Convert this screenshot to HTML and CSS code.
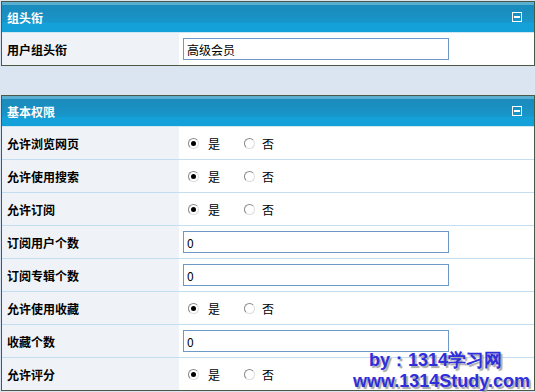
FILE: index.html
```html
<!DOCTYPE html>
<html>
  <head>
    <meta charset="utf-8">
    <title>用户组权限</title>
    <link rel="stylesheet" href="styles.css">
  </head>
  <body>

    <section class="panel">
      <div class="panelHead">
        <h2>组头衔</h2>
        <span class="toggle"></span>
      </div>
      <div class="row">
        <div class="label">用户组头衔</div>
        <div class="value"><input class="txt" type="text" value="高级会员"></div>
      </div>
    </section>

    <section class="panel">
      <div class="panelHead">
        <h2>基本权限</h2>
        <span class="toggle"></span>
      </div>
      <div class="row">
        <div class="label">允许浏览网页</div>
        <div class="value">
          <label class="opt"><input type="radio" name="r1" checked><span>是</span></label>
          <label class="opt"><input type="radio" name="r1"><span>否</span></label>
        </div>
      </div>
      <div class="row">
        <div class="label">允许使用搜索</div>
        <div class="value">
          <label class="opt"><input type="radio" name="r2" checked><span>是</span></label>
          <label class="opt"><input type="radio" name="r2"><span>否</span></label>
        </div>
      </div>
      <div class="row">
        <div class="label">允许订阅</div>
        <div class="value">
          <label class="opt"><input type="radio" name="r3" checked><span>是</span></label>
          <label class="opt"><input type="radio" name="r3"><span>否</span></label>
        </div>
      </div>
      <div class="row">
        <div class="label">订阅用户个数</div>
        <div class="value"><input class="txt" type="text" value="0"></div>
      </div>
      <div class="row">
        <div class="label">订阅专辑个数</div>
        <div class="value"><input class="txt" type="text" value="0"></div>
      </div>
      <div class="row">
        <div class="label">允许使用收藏</div>
        <div class="value">
          <label class="opt"><input type="radio" name="r4" checked><span>是</span></label>
          <label class="opt"><input type="radio" name="r4"><span>否</span></label>
        </div>
      </div>
      <div class="row">
        <div class="label">收藏个数</div>
        <div class="value"><input class="txt" type="text" value="0"></div>
      </div>
      <div class="row">
        <div class="label">允许评分</div>
        <div class="value">
          <label class="opt"><input type="radio" name="r5" checked><span>是</span></label>
          <label class="opt"><input type="radio" name="r5"><span>否</span></label>
        </div>
      </div>
    </section>

    <!-- watermark -->
    <div class="mark">
      <p>by：1314学习网</p>
      <p>www.1314Study.com</p>
    </div>

  </body>
</html>
```

FILE: styles.css
```css
body
{
  margin: 0;
  padding: 1px 0 0 1px;
  background-color: #dae5f1;
  font-family: "Noto Sans CJK SC", "Liberation Sans", sans-serif;
  font-size: 12px;
  position: relative;
  height: 391px;
  overflow: hidden;
}
.panel{
  border: 1px solid #4d5746;
  background-color: #fff;
  width: 532px;
}
.panel + .panel{
  margin-top: 29px;
}
.panelHead{
  height: 30px;
  display: flex;
  align-items: center;
  justify-content: space-between;
  padding: 0 12px 0 5px;
  border-bottom: 1px solid #cfe6f3;
  background: linear-gradient(#5aaed0 0px, #5aaed0 3px, #1a8bbc 3px, #1a8fc2 12px, #1896c9 20px, #14a0d8 21px, #14a0d8 30px);
}
.panelHead h2{
  margin: 0;
  font-size: 12px;
  font-weight: bold;
  color: #fff;
}
.toggle{
  width: 8px;
  height: 8px;
  border: 1px solid #fff;
  position: relative;
}
.toggle::after{
  content: "";
  position: absolute;
  left: 1px;
  top: 3px;
  width: 6px;
  height: 2px;
  background-color: #fff;
}
.row{
  display: grid;
  grid-template-columns: 177px 1fr;
  height: 32px;
  border-bottom: 1px solid #c3def0;
}
.row:last-child{
  border-bottom: none;
}
.label{
  background-color: #eff3f7;
  display: flex;
  align-items: center;
  padding-left: 5px;
  font-weight: bold;
  color: #000;
}
.value{
  display: flex;
  align-items: center;
  padding-left: 4px;
}
.txt{
  width: 258px;
  height: 20px;
  margin: 0;
  padding: 0 3px;
  border: 1px solid #6c9ac8;
  font-family: "Noto Sans CJK SC", "Liberation Sans", sans-serif;
  font-size: 12px;
  color: #000;
  outline: none;
}
.opt{
  display: flex;
  align-items: center;
  margin-left: 5px;
  margin-right: 19px;
}
.opt input{
  appearance: none;
  -webkit-appearance: none;
  width: 11px;
  height: 11px;
  margin: 0 9px 0 0;
  border-radius: 50%;
  border: 1px solid;
  border-color: #888 #ddd #ddd #888;
  background-color: #fff;
  position: relative;
}
.opt + .opt input{
  margin-right: 7px;
}
.opt input:checked::after{
  content: "";
  position: absolute;
  left: 2px;
  top: 2px;
  width: 5px;
  height: 5px;
  border-radius: 50%;
  background-color: #000;
}
.opt span{
  color: #000;
}
.mark{
  position: absolute;
  right: 5px;
  bottom: 0;
  text-align: right;
  font-family: "Liberation Sans", Arial, sans-serif;
  font-weight: bold;
  font-size: 18px;
  color: #2e2edc;
  text-shadow: 2px 2px 1px #a8a8a8;
  line-height: 21px;
}
.mark p{
  margin: 0;
}
.mark p:first-child{
  margin-right: 28px;
}
```
